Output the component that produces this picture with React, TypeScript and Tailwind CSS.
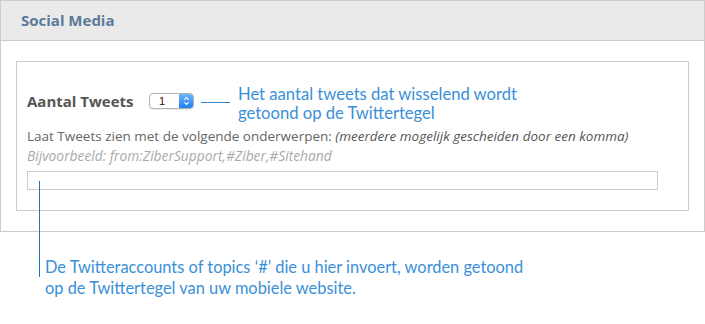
import { ChevronUp, ChevronDown } from "lucide-react";

const sans = "font-['Open_Sans',sans-serif]";
const note = "font-['Lato','Open_Sans',sans-serif] text-[#3a8fd9]";

function MacSelect() {
  return (
    <div className="flex h-[16px] w-[45px] overflow-hidden rounded-[4px] border border-[#b3b3b3] bg-white shadow-[0_1px_1px_rgba(0,0,0,0.08)]">
      <div className="flex flex-1 items-center pl-[9px] text-[11px] leading-none text-[#3a1010] font-['Liberation_Sans',sans-serif]">
        1
      </div>
      <div className="flex w-[14px] flex-col items-center justify-center bg-gradient-to-b from-[#6db4fb] to-[#1b7ef3]">
        <ChevronUp className="-mb-[2px] h-[7px] w-[7px] text-white" strokeWidth={3.5} />
        <ChevronDown className="h-[7px] w-[7px] text-white" strokeWidth={3.5} />
      </div>
    </div>
  );
}

export default function App() {
  return (
    <div className={`min-h-[324px] w-[705px] bg-white ${sans}`}>
      <div className="border border-[#cccccc]">
        <div className="flex h-[40px] items-center border-b border-[#cccccc] bg-[#eaeaea] pl-5">
          <h2 className="text-[15px] font-bold text-[#5b7a9b]">Social Media</h2>
        </div>
        <div className="px-[15px] pb-5 pt-5">
          <div className="border border-[#cccccc] pb-5 pl-[10px] pr-[31px] pt-5">
            <div className="flex items-center">
              <span className="w-[122px] text-[15px] font-bold text-[#555555]">Aantal Tweets</span>
              <MacSelect />
              <div className="ml-[7px] mt-[2px] h-px w-[29px] bg-[#2b86d2]" />
              <p className={`-mb-[3px] ml-2 mt-[3px] text-[16.6px] leading-[19px] ${note}`}>
                Het aantal tweets dat wisselend wordt
                <br />
                getoond op de Twittertegel
              </p>
            </div>
            <div className="mt-[7px] leading-[19px]">
              <p className="text-[13.5px] text-[#666666]">
                Laat Tweets zien met de volgende onderwerpen:{" "}
                <em className="text-[#555555]">(meerdere mogelijk gescheiden door een komma)</em>
              </p>
              <p className="text-[13.8px] italic text-[#aaaaaa]">Bijvoorbeeld: from:ZiberSupport,#Ziber,#Sitehand</p>
            </div>
            <input
              type="text"
              className="mt-[6px] block h-[19px] w-[631px] border border-[#cccccc] bg-white outline-none"
            />
          </div>
        </div>
      </div>
      <div className="relative ml-[39px] mt-[24px] pl-[6px]">
        <div className="absolute -top-[75px] left-0 h-[96px] w-px bg-[#1f77c0]" />
        <p className={`text-[16.4px] leading-[21px] ${note}`}>
          De Twitteraccounts of topics ‘#’ die u hier invoert, worden getoond
          <br />
          op de Twittertegel van uw mobiele website.
        </p>
      </div>
    </div>
  );
}
